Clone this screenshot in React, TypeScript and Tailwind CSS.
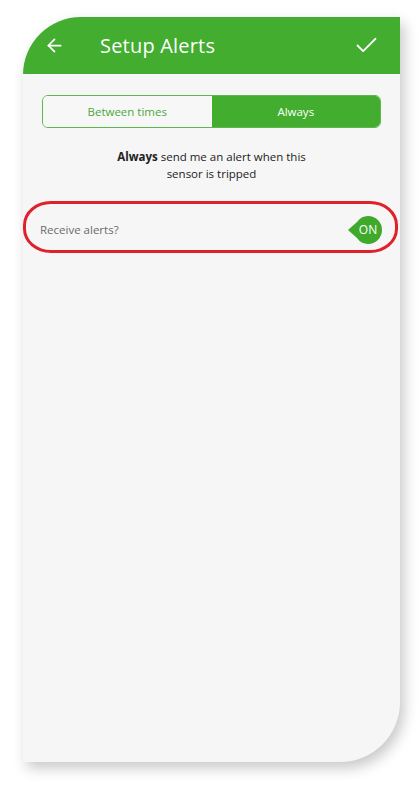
import { ArrowLeft, Check } from "lucide-react";

function OnBadge() {
  return (
    <div className="relative grid h-[28px] w-[34px] place-items-center">
      <svg className="absolute inset-0" width="34" height="28" viewBox="0 0 34 28">
        <path d="M20 0 A14 14 0 1 1 20 28 A14 14 0 0 1 9 22 L0 14 L9 6 A14 14 0 0 1 20 0 Z" fill="#3ea92b" />
      </svg>
      <span className="relative pl-[6px] text-[12px] text-white">ON</span>
    </div>
  );
}

export default function App() {
  return (
    <div className="relative h-[785px] w-[420px] bg-white font-['Open_Sans',sans-serif]">
      <div className="pl-[23px] pt-[17px]">
        <div className="relative flex h-[745px] w-[377px] flex-col overflow-hidden rounded-tl-[58px] rounded-br-[60px] bg-[#f6f6f6] shadow-[4px_6px_14px_rgba(0,0,0,0.22)]">
          <header className="flex h-[57px] shrink-0 items-center bg-[#42ad2e] pl-[21px] pr-[20px] text-white">
            <ArrowLeft className="h-[21px] w-[21px]" strokeWidth={2} />
            <h1 className="ml-[35px] flex-1 text-[20px] tracking-[0.2px]">Setup Alerts</h1>
            <Check className="h-[27px] w-[27px]" strokeWidth={1.6} />
          </header>

          <div className="mx-[19px] mt-[21px] flex h-[33px] overflow-hidden rounded-[6px] border border-[#5cb84a]">
            <div className="grid flex-1 place-items-center bg-[#f7f7f7] text-[11.5px] text-[#4aa83a]">Between times</div>
            <div className="grid flex-1 place-items-center bg-[#42ad2e] text-[11.5px] text-white">Always</div>
          </div>

          <p className="mx-auto mt-[20px] w-[200px] text-center text-[11.5px] leading-[17px] text-[#222]">
            <span className="font-bold">Always</span> send me an alert when this sensor is tripped
          </p>

          <div className="mt-[28px] flex h-[40px] items-center justify-between pl-[17px] pr-[18px]">
            <span className="text-[11.5px] text-[#6b6b6b]">Receive alerts?</span>
            <OnBadge />
          </div>
        </div>
      </div>
      <div className="pointer-events-none absolute left-[23px] top-[201px] h-[52px] w-[375px] rounded-[28px/24px] border-[3px] border-[#e0212b]" />
    </div>
  );
}
